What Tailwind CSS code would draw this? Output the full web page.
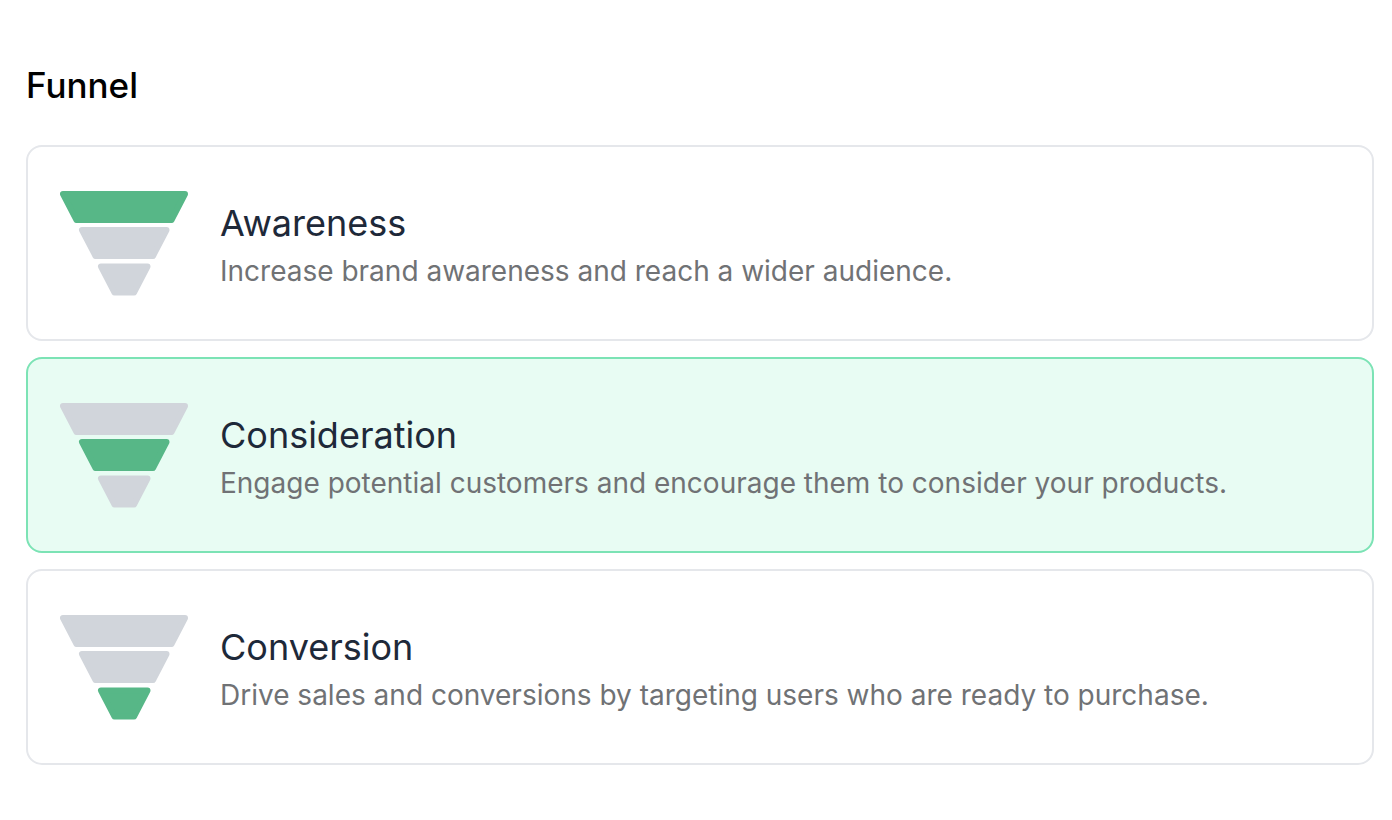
<!DOCTYPE html>
<html lang="en">

<head>
    <meta charset="UTF-8">
    <title>Funnel</title>
    <script src="https://cdn.jsdelivr.net/npm/@tailwindcss/browser@4"></script>
</head>

<body class="bg-white font-['Inter',sans-serif] antialiased">
    <fieldset class="pl-[26px] pr-[18px] pt-[65px] pb-14">
        <legend class="contents"><span class="block text-[35px] leading-10 font-medium text-black">Funnel</span></legend>

        <div class="mt-10 flex flex-col gap-4">
            <label class="flex cursor-pointer items-center gap-8 rounded-2xl border-2 border-gray-200 px-8 py-[42px] has-checked:border-[#7ce3b5] has-checked:bg-[#e8fcf3]">
                <input type="radio" name="funnel" value="awareness" class="sr-only">
                <svg class="h-[108px] w-32 shrink-0" viewBox="0 0 128 108" stroke-width="6" stroke-linejoin="round" aria-hidden="true">
                    <path d="M3 5H125L111.5 31H16.5Z" fill="#57b787" stroke="#57b787" />
                    <path d="M22 41H106.5L93 67H35.5Z" fill="#d1d5db" stroke="#d1d5db" />
                    <path d="M41 77.5H87.5L74 103.5H54.5Z" fill="#d1d5db" stroke="#d1d5db" />
                </svg>
                <span class="flex flex-col">
                    <span class="text-4xl leading-[56px] text-gray-800">Awareness</span>
                    <span class="text-[28px] leading-10 text-[#707275]">Increase brand awareness and reach a wider audience.</span>
                </span>
            </label>

            <label class="flex cursor-pointer items-center gap-8 rounded-2xl border-2 border-gray-200 px-8 py-[42px] has-checked:border-[#7ce3b5] has-checked:bg-[#e8fcf3]">
                <input type="radio" name="funnel" value="consideration" class="sr-only" checked>
                <svg class="h-[108px] w-32 shrink-0" viewBox="0 0 128 108" stroke-width="6" stroke-linejoin="round" aria-hidden="true">
                    <path d="M3 5H125L111.5 31H16.5Z" fill="#d1d5db" stroke="#d1d5db" />
                    <path d="M22 41H106.5L93 67H35.5Z" fill="#57b787" stroke="#57b787" />
                    <path d="M41 77.5H87.5L74 103.5H54.5Z" fill="#d1d5db" stroke="#d1d5db" />
                </svg>
                <span class="flex flex-col">
                    <span class="text-4xl leading-[56px] text-gray-800">Consideration</span>
                    <span class="text-[28px] leading-10 text-[#707275]">Engage potential customers and encourage them to consider your products.</span>
                </span>
            </label>

            <label class="flex cursor-pointer items-center gap-8 rounded-2xl border-2 border-gray-200 px-8 py-[42px] has-checked:border-[#7ce3b5] has-checked:bg-[#e8fcf3]">
                <input type="radio" name="funnel" value="conversion" class="sr-only">
                <svg class="h-[108px] w-32 shrink-0" viewBox="0 0 128 108" stroke-width="6" stroke-linejoin="round" aria-hidden="true">
                    <path d="M3 5H125L111.5 31H16.5Z" fill="#d1d5db" stroke="#d1d5db" />
                    <path d="M22 41H106.5L93 67H35.5Z" fill="#d1d5db" stroke="#d1d5db" />
                    <path d="M41 77.5H87.5L74 103.5H54.5Z" fill="#57b787" stroke="#57b787" />
                </svg>
                <span class="flex flex-col">
                    <span class="text-4xl leading-[56px] text-gray-800">Conversion</span>
                    <span class="text-[28px] leading-10 text-[#707275]">Drive sales and conversions by targeting users who are ready to purchase.</span>
                </span>
            </label>
        </div>
    </fieldset>
</body>

</html>
